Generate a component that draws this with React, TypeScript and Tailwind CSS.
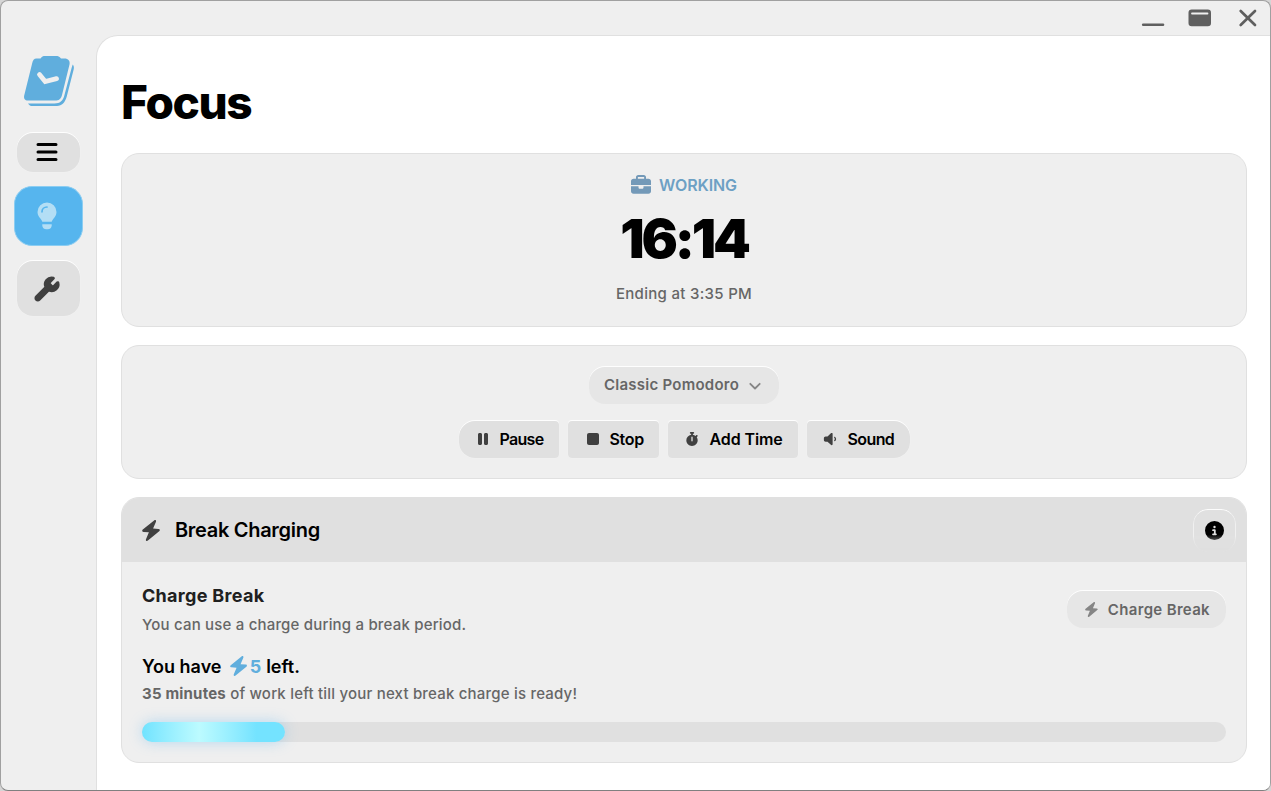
import type { ReactNode } from "react";
import clsx from "clsx";
import {
  FaBriefcase,
  FaCircleInfo,
  FaPause,
  FaStop,
  FaStopwatch,
  FaVolumeLow,
} from "react-icons/fa6";

const edge =
  "bg-[#e0e0e0] shadow-[0_-1px_0_rgba(255,255,255,0.9),0_0_1px_rgba(255,255,255,0.8)]";

function Logo() {
  return (
    <svg width="52" height="52" viewBox="0 0 52 52" fill="none">
      <path
        d="M13.500 3.500H17.500C19 1.500 20 1 22 1H33C35 1 36.500 1.500 38 3.500H41.500C45.300 3.500 47.300 6 46.500 9.500L39 40C38 44 36 45.600 32 45.600H5C2 45.600 .5 43.500 1.200 40.500L9 9C9.800 5.300 11 3.500 13.500 3.500Z"
        fill="#60aedd"
      />
      <path
        d="M49.700 9.500C51.200 11 51 13 50.600 14.800L43.700 41.800C42 47.500 39 51 34 51H9.500C7.500 51 6 50 5 48.400H31.500C37 48.400 39.800 46 41.200 41L48.600 13Z"
        fill="#60aedd"
      />
      <path
        d="M16.500 19.500L22.200 26.500L33.500 23.700"
        stroke="#efefef"
        strokeWidth="4.800"
        strokeLinecap="round"
        strokeLinejoin="miter"
      />
    </svg>
  );
}

function Bars() {
  return (
    <svg width="22" height="20" viewBox="0 0 22 20" stroke="currentColor" strokeWidth="3" strokeLinecap="round">
      <path d="M2 2.500H20M2 10H20M2 17.500H20" />
    </svg>
  );
}

function Bulb() {
  return (
    <svg width="20" height="28" viewBox="0 0 20 28" fill="none">
      <path
        d="M10 .5A9.500 9.500 0 0 0 .5 10C.5 13 2 14.800 3.400 16.500C4.400 17.700 5 18.700 5.300 19.700H14.700C15 18.700 15.600 17.700 16.600 16.500C18 14.800 19.500 13 19.500 10A9.500 9.500 0 0 0 10 .5Z"
        fill="currentColor"
      />
      <path d="M5.300 22.300H14.700V23.300C14.700 25.800 13 27.300 10.800 27.300H9.200C7 27.300 5.300 25.800 5.300 23.300Z" fill="currentColor" />
      <path d="M5 9.800C5 7 7.200 5 10 5" stroke="#56b5ee" strokeWidth="1.700" strokeLinecap="round" />
    </svg>
  );
}

function Wrench() {
  return (
    <svg
      width="28"
      height="28"
      viewBox="0 0 24 24"
      fill="currentColor"
      stroke="currentColor"
      strokeWidth="1.500"
      strokeLinejoin="round"
    >
      <path d="M14.700 6.300a1 1 0 0 0 0 1.400l1.600 1.600a1 1 0 0 0 1.400 0l3.106-3.105c.32-.322.863-.22.983.218a6 6 0 0 1-8.259 7.057l-7.910 7.910a1 1 0 0 1-2.999-3l7.910-7.910a6 6 0 0 1 7.057-8.259c.438.12.54.662.219.984z" />
    </svg>
  );
}

function Bolt({ size, className }: { size: number; className?: string }) {
  return (
    <svg width={size * 0.857} height={size} viewBox="0 0 18 21" fill="currentColor" className={className}>
      <path d="M12.100 .4L.8 9.600C-.3 10.600 .2 11.800 1.500 11.900L6.900 12.300L4 19.300C3.500 20.800 4.800 21.500 5.900 20.600L17.200 11.300C18.300 10.300 17.800 9.100 16.500 9L11.100 8.600L14 1.700C14.500 .2 13.200-.5 12.100 .4Z" />
    </svg>
  );
}

function TitleBar() {
  return (
    <div className="flex h-[34px] shrink-0 items-start justify-end pr-[13px] text-[#5f5f5f]">
      <svg width="118" height="34" viewBox="0 0 118 34" fill="none">
        <path d="M4.200 23.800H24" stroke="currentColor" strokeWidth="2.600" strokeLinecap="round" />
        <rect x="49.500" y="8.500" width="22.500" height="16.800" rx="3.200" fill="currentColor" />
        <path d="M53 12.500H68.500" stroke="#efefef" strokeWidth="1.800" strokeLinecap="round" />
        <path
          d="M101.700 10L116 24M116 10L101.700 24"
          stroke="currentColor"
          strokeWidth="2.700"
          strokeLinecap="round"
        />
      </svg>
    </div>
  );
}

function Sidebar() {
  return (
    <aside className="flex w-[95px] shrink-0 flex-col items-center pt-[20px]">
      <Logo />
      <button
        className={clsx(
          "mt-[26px] flex h-[39px] w-[63px] items-center justify-center rounded-[16px] pr-[3px] pb-px text-black",
          edge,
        )}
      >
        <Bars />
      </button>
      <button className="mt-[14px] flex h-[60px] w-[69px] items-center justify-center rounded-[18px] border border-[#8bcdf2] bg-[#56b5ee] pr-[3px] text-[#b3def5]">
        <Bulb />
      </button>
      <button
        className={clsx(
          "mt-[15px] flex h-[55px] w-[63px] items-center justify-center rounded-[16px] pr-[3px] text-[#404040]",
          edge,
        )}
      >
        <Wrench />
      </button>
    </aside>
  );
}

type ControlProps = {
  icon: ReactNode;
  label: string;
  className: string;
  labelClass: string;
};

function Control({ icon, label, className, labelClass }: ControlProps) {
  return (
    <button
      className={clsx("flex h-[37px] items-center pb-px text-base font-semibold text-black", edge, className)}
    >
      <span className="flex text-[#404040]">{icon}</span>
      <span className={clsx("whitespace-nowrap", labelClass)}>{label}</span>
    </button>
  );
}

function TimerCard() {
  return (
    <section className="flex h-[174px] flex-col items-center rounded-[18px] border border-[#e0e0e0] bg-[#efefef]">
      <div className="mt-[19px] flex h-6 items-center gap-2 text-[#7399b8]">
        <FaBriefcase size={20} />
        <span className="text-[16px] font-semibold tracking-[-0.1px] text-[#6da0c4]">WORKING</span>
      </div>
      <div className="mt-[10px] h-[64px] text-[54px] leading-[64px] font-black tracking-[-3.2px] text-black">
        16:14
      </div>
      <div className="mt-[11px] text-[15px] leading-6 font-medium tracking-[0.3px] text-[#666]">
        Ending at 3:35 PM
      </div>
    </section>
  );
}

function ControlsCard() {
  return (
    <section className="mt-[18px] flex h-[134px] flex-col items-center rounded-[18px] border border-[#e0e0e0] bg-[#efefef] pt-[21px]">
      <button className="flex h-[37px] w-[190px] items-center rounded-[16px] bg-[#e6e6e6] pl-[15px] text-[15px] font-semibold text-[#666] shadow-[0_-1px_0_rgba(255,255,255,0.9)]">
        <span className="w-[144px] text-left tracking-[0.25px] whitespace-nowrap">Classic Pomodoro</span>
        <svg width="14" height="14" viewBox="0 0 14 14" fill="none" stroke="#858585" strokeWidth="1.800">
          <path d="M2.300 4.800L7 9.500L11.700 4.800" strokeLinecap="round" strokeLinejoin="round" />
        </svg>
      </button>
      <div className="mt-[17px] flex gap-[9px]">
        <Control
          icon={<FaPause size={16} />}
          label="Pause"
          className="w-[100px] rounded-l-[16px] rounded-r-[4px] pl-[16px]"
          labelClass="ml-[9px] tracking-[-0.7px]"
        />
        <Control
          icon={<FaStop size={16} />}
          label="Stop"
          className="w-[91px] rounded-[4px] pl-[17px]"
          labelClass="ml-[9px] tracking-[-0.3px]"
        />
        <Control
          icon={<FaStopwatch size={14} />}
          label="Add Time"
          className="w-[130px] rounded-[4px] pl-[17px]"
          labelClass="ml-[11px] tracking-[-0.1px]"
        />
        <Control
          icon={<FaVolumeLow size={14} />}
          label="Sound"
          className="w-[103px] rounded-l-[4px] rounded-r-[16px] pl-[16px]"
          labelClass="ml-[11px] tracking-[-0.6px]"
        />
      </div>
    </section>
  );
}

function BreakCard() {
  return (
    <section className="mt-[18px] flex h-[266px] flex-col overflow-hidden rounded-[18px] border border-[#e0e0e0] bg-[#efefef]">
      <header className="flex h-[64px] shrink-0 items-center bg-[#e0e0e0] pr-[10px] pl-5">
        <Bolt size={21} className="text-[#404040]" />
        <h2 className="ml-[15px] flex-1 text-[20px] font-semibold tracking-[-0.3px] text-black">
          Break Charging
        </h2>
        <button className="flex h-[43px] w-[43px] items-center justify-center rounded-[15px] border-x border-t border-white/50 border-t-white/90 bg-[#e0e0e0] mask-b-from-60% mask-b-to-95% text-black">
          <FaCircleInfo size={19} />
        </button>
      </header>
      <div className="px-5">
        <div className="flex items-start justify-between">
          <div className="pt-[20px]">
            <h3 className="text-[18px] leading-7 font-bold tracking-[0.3px] text-[#202020]">Charge Break</h3>
            <p className="mt-[3px] text-[15px] leading-6 font-medium tracking-[0.19px] text-[#666]">
              You can use a charge during a break period.
            </p>
          </div>
          <button className="mt-[29px] flex h-[37px] w-[159px] items-center rounded-[16px] bg-[#e6e6e6] pl-[18px] text-[15px] font-semibold text-[#666] shadow-[0_-1px_0_rgba(255,255,255,0.9)]">
            <Bolt size={15} className="text-[#858585]" />
            <span className="mt-px ml-[10px] tracking-[0.33px] whitespace-nowrap">Charge Break</span>
          </button>
        </div>
        <p className="mt-[15px] flex h-7 items-center text-[18px] font-semibold text-black">
          <span>You have</span>
          <Bolt size={20} className="ml-[8px] text-[#60aedd]" />
          <span className="ml-[3px] font-bold text-[#60aedd]">5</span>
          <span className="ml-[5px]">left.</span>
        </p>
        <p className="mt-[2px] text-[15px] leading-6 font-medium tracking-[0.2px] text-[#666]">
          <b className="font-bold">35 minutes</b> of work left till your next break charge is ready!
        </p>
        <div className="mt-[16px] h-5 rounded-full bg-[#e0e0e0]">
          <div className="h-5 w-[143px] rounded-full bg-linear-to-r from-[#70e3ff] via-[#bcfbff] via-40% to-[#74e3ff] to-80% shadow-[0_0_14px_rgba(96,180,240,0.4)]" />
        </div>
      </div>
    </section>
  );
}

export default function App() {
  return (
    <div className="h-[791px] w-[1271px] bg-[#d5d5d5] font-['Inter',sans-serif]">
      <div className="flex h-full flex-col overflow-hidden rounded-[8px] border border-[#a0a0a0] border-b-[#808080] bg-[#efefef]">
        <TitleBar />
        <div className="flex min-h-0 flex-1">
          <Sidebar />
          <main className="min-w-0 flex-1 rounded-tl-[22px] border-t border-l border-[#e0e0e0] bg-white pr-[23px] pl-6">
            <h1 className="mt-[36px] mb-[21px] h-[60px] text-[46px] leading-[60px] font-extrabold tracking-[-1.4px] text-black">
              Focus
            </h1>
            <TimerCard />
            <ControlsCard />
            <BreakCard />
          </main>
        </div>
      </div>
    </div>
  );
}
